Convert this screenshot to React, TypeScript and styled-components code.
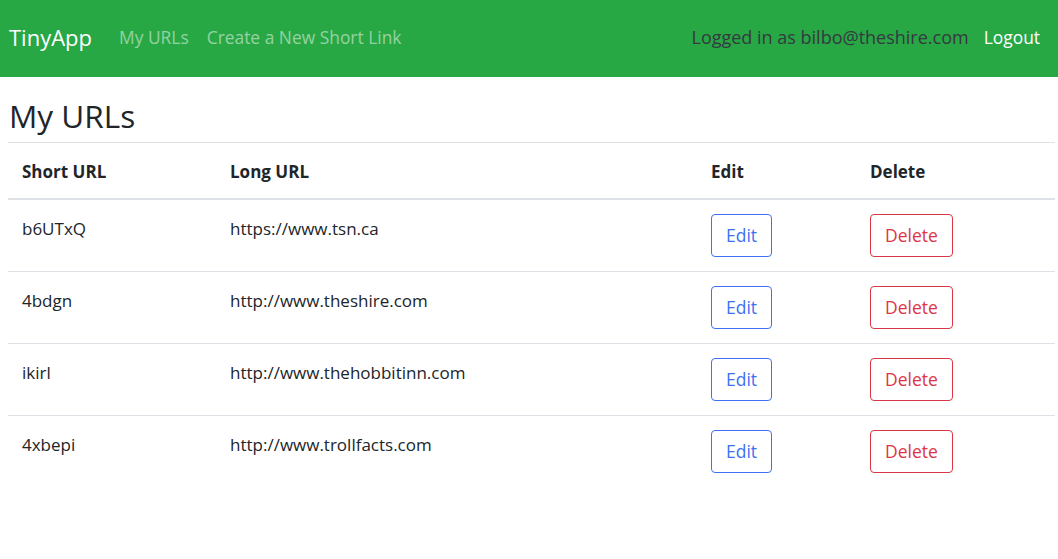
import React from 'react';
import styled, { createGlobalStyle } from 'styled-components';

const GlobalStyle = createGlobalStyle`
  html, body {
    margin: 0;
    padding: 0;
    background: #fff;
    font-family: 'Segoe UI', 'Open Sans', 'Noto Sans', Arial, sans-serif;
    color: #212529;
  }
  *, *::before, *::after {
    box-sizing: border-box;
  }
`;

const NavBar = styled.nav`
  height: 77px;
  background: #28a745;
  display: flex;
  align-items: center;
  padding: 0 18px 3px 9px;
`;

const Brand = styled.a`
  color: #fff;
  font-size: 22px;
  margin-right: 27px;
  text-decoration: none;
`;

const NavLinks = styled.div`
  display: flex;
  gap: 18px;
  flex: 1;
`;

const NavLink = styled.a<{ $light?: boolean }>`
  color: ${(p) => (p.$light ? '#fff' : 'rgba(255, 255, 255, 0.5)')};
  font-size: 17.4px;
  text-decoration: none;
`;

const NavRight = styled.div`
  display: flex;
  align-items: center;
  gap: 15px;
`;

const LoggedIn = styled.span`
  color: #343a40;
  font-size: 18px;
`;

const Main = styled.main`
  padding: 17px 3px 0 8px;
`;

const Title = styled.h2`
  margin: 0 0 4px 1px;
  font-size: 31.5px;
  font-weight: 500;
  line-height: 44px;
`;

const Table = styled.table`
  width: 100%;
  border-collapse: collapse;
  font-size: 17px;
  table-layout: fixed;
`;

const Th = styled.th<{ $w?: number }>`
  width: ${(p) => (p.$w ? `${p.$w}px` : 'auto')};
  text-align: left;
  font-weight: 700;
  padding: 15px 14px 13px;
  line-height: 27px;
  border-top: 1px solid #dee2e6;
  border-bottom: 2px solid #dee2e6;
`;

const Td = styled.td`
  vertical-align: top;
  padding: 16px 14px 14px;
  line-height: 26px;
  border-top: 1px solid #dee2e6;
`;

const Row = styled.tr`
  &:first-child td {
    border-top: none;
  }
`;

const OutlineButton = styled.button<{ $color: string }>`
  font-family: inherit;
  font-size: 17.5px;
  line-height: 27px;
  padding: 7px 14px;
  margin-top: -2px;
  color: ${(p) => p.$color};
  background: transparent;
  border: 1px solid ${(p) => p.$color};
  border-radius: 4px;
  cursor: pointer;
`;

const urls = [
  { id: 'b6UTxQ', long: 'https://www.tsn.ca' },
  { id: '4bdgn', long: 'http://www.theshire.com' },
  { id: 'ikirl', long: 'http://www.thehobbitinn.com' },
  { id: '4xbepi', long: 'http://www.trollfacts.com' },
];

export default function App() {
  return (
    <>
      <GlobalStyle />
      <NavBar>
        <Brand href="#">TinyApp</Brand>
        <NavLinks>
          <NavLink href="#">My URLs</NavLink>
          <NavLink href="#">Create a New Short Link</NavLink>
        </NavLinks>
        <NavRight>
          <LoggedIn>Logged in as bilbo@theshire.com</LoggedIn>
          <NavLink href="#" $light>
            Logout
          </NavLink>
        </NavRight>
      </NavBar>
      <Main>
        <Title>My URLs</Title>
        <Table>
          <thead>
            <tr>
              <Th $w={208}>Short URL</Th>
              <Th $w={481}>Long URL</Th>
              <Th $w={159}>Edit</Th>
              <Th>Delete</Th>
            </tr>
          </thead>
          <tbody>
            {urls.map((u) => (
              <Row key={u.id}>
                <Td>{u.id}</Td>
                <Td>{u.long}</Td>
                <Td>
                  <OutlineButton $color="#4070f4">Edit</OutlineButton>
                </Td>
                <Td>
                  <OutlineButton $color="#dc3545">Delete</OutlineButton>
                </Td>
              </Row>
            ))}
          </tbody>
        </Table>
      </Main>
    </>
  );
}
